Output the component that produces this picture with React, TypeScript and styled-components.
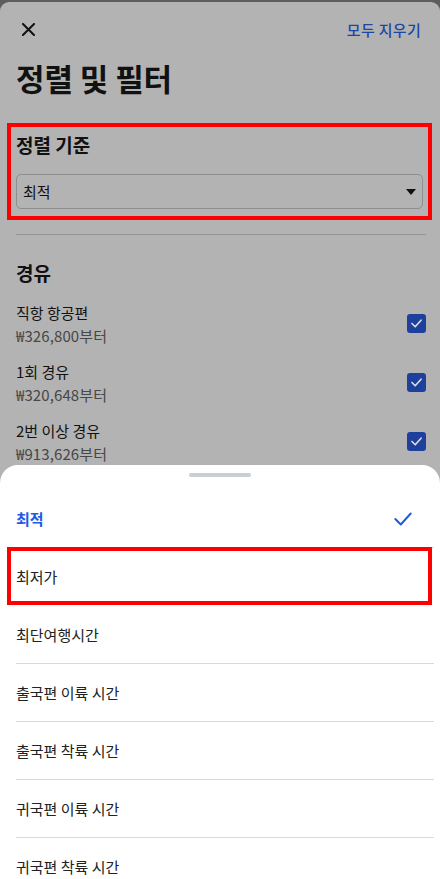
import React from "react";
import styled, { createGlobalStyle } from "styled-components";

const GlobalStyle = createGlobalStyle`
  html, body {
    margin: 0;
    padding: 0;
    height: 100%;
    overflow: hidden;
    background: #5d5d5d;
  }
  body {
    font-family: "Noto Sans CJK KR", "Noto Sans", sans-serif;
  }
`;

const Page = styled.div`
  margin-top: 2px;
  min-height: 877px;
  background: #b3b3b3;
  border-radius: 9px 9px 0 0;
  color: #111;
`;

const Header = styled.div`
  height: 54px;
  display: flex;
  align-items: center;
  justify-content: space-between;
  padding: 0 19px 0 20px;
`;

const CloseButton = styled.button`
  width: 16px;
  height: 16px;
  padding: 0;
  border: none;
  background: none;
  display: flex;
  align-items: center;
  justify-content: center;
`;

const ClearButton = styled.span`
  font-size: 15px;
  font-weight: 500;
  letter-spacing: 0.3px;
  color: #1b46a6;
`;

const Title = styled.h1`
  margin: 2px 0 0;
  padding: 0 16px;
  font-size: 31px;
  line-height: 40px;
  font-weight: 700;
  letter-spacing: -0.1px;
`;

const SortSection = styled.section`
  margin: 25px 8px 0 7px;
  padding: 6px 5px 7px;
  border: 4px solid #ff0000;
`;

const SectionHeading = styled.h2`
  margin: 0;
  font-size: 19px;
  line-height: 24px;
  font-weight: 700;
  letter-spacing: 0;
`;

const Select = styled.div`
  margin-top: 17px;
  height: 35px;
  box-sizing: border-box;
  border: 1px solid #8e8e8e;
  border-radius: 5px;
  display: flex;
  align-items: center;
  justify-content: space-between;
  padding: 0 6px 0 6px;
  font-size: 15px;
`;

const Divider = styled.hr`
  margin: 14px 14px 0 16px;
  border: none;
  border-top: 1px solid #969696;
`;

const FilterSection = styled.section`
  padding: 0 14px 0 16px;
  margin-top: 26px;
`;

const StopList = styled.div`
  margin-top: 9px;
`;

const StopRow = styled.div`
  height: 59px;
  display: flex;
  align-items: center;
  justify-content: space-between;
`;

const StopText = styled.div`
  display: flex;
  flex-direction: column;
`;

const StopName = styled.span`
  font-size: 15px;
  line-height: 22px;
`;

const StopPrice = styled.span`
  margin-top: 2px;
  font-size: 15px;
  line-height: 20px;
  letter-spacing: 0.1px;
  color: #474747;
`;

const Checkbox = styled.span`
  width: 19px;
  height: 19px;
  border-radius: 3px;
  background: #1c409b;
  display: flex;
  align-items: center;
  justify-content: center;
`;

const Sheet = styled.div`
  position: fixed;
  left: 0;
  right: 0;
  bottom: 0;
  height: 414px;
  background: #ffffff;
  border-radius: 18px 18px 0 0;
  overflow: hidden;
`;

const Handle = styled.div`
  width: 62px;
  height: 4px;
  border-radius: 2px;
  background: #c9ced3;
  margin: 8px auto 13px;
`;

const Option = styled.div<{ $active?: boolean; $marked?: boolean }>`
  height: 58px;
  box-sizing: border-box;
  display: flex;
  align-items: center;
  justify-content: space-between;
  font-size: 15px;
  color: ${(p) => (p.$active ? "#1f5ae3" : "#222")};
  font-weight: ${(p) => (p.$active ? 700 : 400)};
  margin: ${(p) => (p.$marked ? "-1px 8px 1px 7px" : "0 6px 0 16px")};
  padding: ${(p) => (p.$marked ? "0 5px" : "0 20px 0 0")};
  border: ${(p) => (p.$marked ? "4px solid #ff0000" : "none")};
  border-bottom: ${(p) =>
    p.$marked ? "4px solid #ff0000" : "1px solid #d6dade"};
`;

const stops = [
  { name: "직항 항공편", price: "₩326,800부터" },
  { name: "1회 경유", price: "₩320,648부터" },
  { name: "2번 이상 경유", price: "₩913,626부터" },
];

const options = [
  "최저가",
  "최단여행시간",
  "출국편 이륙 시간",
  "출국편 착륙 시간",
  "귀국편 이륙 시간",
  "귀국편 착륙 시간",
];

const CheckMark = ({ color, size }: { color: string; size: number }) => (
  <svg width={size} height={size} viewBox="0 0 20 20" fill="none">
    <polyline
      points="3,10 8,15 17,5"
      stroke={color}
      strokeWidth={size > 15 ? 1.8 : 2.6}
      strokeLinecap="round"
      strokeLinejoin="round"
    />
  </svg>
);

const App = (): JSX.Element => (
  <>
    <GlobalStyle />
    <Page>
      <Header>
        <CloseButton aria-label="닫기">
          <svg width="13" height="13" viewBox="0 0 13 13">
            <path
              d="M1 1 L12 12 M12 1 L1 12"
              stroke="#111"
              strokeWidth="2"
              strokeLinecap="square"
            />
          </svg>
        </CloseButton>
        <ClearButton>모두 지우기</ClearButton>
      </Header>
      <Title>정렬 및 필터</Title>
      <SortSection>
        <SectionHeading>정렬 기준</SectionHeading>
        <Select>
          <span>최적</span>
          <svg width="10" height="6" viewBox="0 0 10 6">
            <path d="M0 0 H10 L5 6 Z" fill="#111" />
          </svg>
        </Select>
      </SortSection>
      <Divider />
      <FilterSection>
        <SectionHeading>경유</SectionHeading>
        <StopList>
          {stops.map((s) => (
            <StopRow key={s.name}>
              <StopText>
                <StopName>{s.name}</StopName>
                <StopPrice>{s.price}</StopPrice>
              </StopText>
              <Checkbox>
                <CheckMark color="#d9dbe3" size={13} />
              </Checkbox>
            </StopRow>
          ))}
        </StopList>
      </FilterSection>
    </Page>
    <Sheet>
      <Handle />
      <Option $active>
        <span>최적</span>
        <CheckMark color="#1f5ae3" size={22} />
      </Option>
      {options.map((o, i) => (
        <Option key={o} $marked={i === 0}>
          <span>{o}</span>
        </Option>
      ))}
    </Sheet>
  </>
);

export default App;
